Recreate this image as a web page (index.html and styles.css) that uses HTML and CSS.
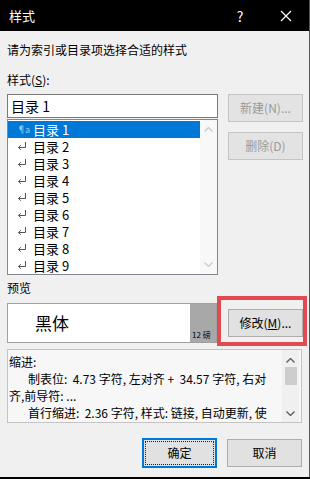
FILE: index.html
```html
<!DOCTYPE html>
<html lang="zh-CN">
<head>
    <meta charset="UTF-8">
    <meta name="viewport" content="width=device-width, initial-scale=1.0">
    <title>样式</title>
    <link rel="stylesheet" href="styles.css">
</head>
<body>

<div class="dialog">
    <div class="titlebar">
        <span class="title">样式</span>
        <span class="tb-btn">?</span>
        <span class="tb-btn">
            <svg width="12" height="12" viewBox="0 0 12 12"><path d="M1 1 L11 11 M11 1 L1 11" stroke="#fff" stroke-width="1.2"/></svg>
        </span>
    </div>

    <div class="content">
        <p class="intro">请为索引或目录项选择合适的样式</p>
        <p class="label">样式(<u>S</u>):</p>

        <div class="row top-row">
            <div class="left">
                <div class="input">目录 1</div>
                <div class="list">
                    <div class="items">
                        <div class="item selected"><span class="link-icon">¶a</span>目录 1</div>
                        <div class="item"><svg class="ret" width="10" height="9" viewBox="0 0 10 9"><path d="M8.5 0 V5.5 H1.5 M3.8 3.2 L1.5 5.5 L3.8 7.8" fill="none" stroke="#555"/></svg>目录 2</div>
                        <div class="item"><svg class="ret" width="10" height="9" viewBox="0 0 10 9"><path d="M8.5 0 V5.5 H1.5 M3.8 3.2 L1.5 5.5 L3.8 7.8" fill="none" stroke="#555"/></svg>目录 3</div>
                        <div class="item"><svg class="ret" width="10" height="9" viewBox="0 0 10 9"><path d="M8.5 0 V5.5 H1.5 M3.8 3.2 L1.5 5.5 L3.8 7.8" fill="none" stroke="#555"/></svg>目录 4</div>
                        <div class="item"><svg class="ret" width="10" height="9" viewBox="0 0 10 9"><path d="M8.5 0 V5.5 H1.5 M3.8 3.2 L1.5 5.5 L3.8 7.8" fill="none" stroke="#555"/></svg>目录 5</div>
                        <div class="item"><svg class="ret" width="10" height="9" viewBox="0 0 10 9"><path d="M8.5 0 V5.5 H1.5 M3.8 3.2 L1.5 5.5 L3.8 7.8" fill="none" stroke="#555"/></svg>目录 6</div>
                        <div class="item"><svg class="ret" width="10" height="9" viewBox="0 0 10 9"><path d="M8.5 0 V5.5 H1.5 M3.8 3.2 L1.5 5.5 L3.8 7.8" fill="none" stroke="#555"/></svg>目录 7</div>
                        <div class="item"><svg class="ret" width="10" height="9" viewBox="0 0 10 9"><path d="M8.5 0 V5.5 H1.5 M3.8 3.2 L1.5 5.5 L3.8 7.8" fill="none" stroke="#555"/></svg>目录 8</div>
                        <div class="item"><svg class="ret" width="10" height="9" viewBox="0 0 10 9"><path d="M8.5 0 V5.5 H1.5 M3.8 3.2 L1.5 5.5 L3.8 7.8" fill="none" stroke="#555"/></svg>目录 9</div>
                    </div>
                    <div class="scrollbar faint">
                        <svg width="9" height="5" viewBox="0 0 9 5"><path d="M0.5 4.5 L4.5 0.5 L8.5 4.5" fill="none" stroke="currentColor" stroke-width="1.2"/></svg>
                        <svg width="9" height="5" viewBox="0 0 9 5"><path d="M0.5 0.5 L4.5 4.5 L8.5 0.5" fill="none" stroke="currentColor" stroke-width="1.2"/></svg>
                    </div>
                </div>
            </div>
            <div class="side">
                <button class="btn" disabled>新建(N)...</button>
                <button class="btn" disabled>删除(D)</button>
            </div>
        </div>

        <p class="label preview-label">预览</p>

        <div class="row preview-row">
            <div class="preview">
                <span class="sample">黑体</span>
                <span class="size"><span>12 磅</span></span>
            </div>
            <div class="side">
                <button class="btn">修改(<u>M</u>)...</button>
                <div class="mark"></div>
            </div>
        </div>

        <div class="desc">
            <div class="desc-text">
                <div>缩进:</div>
                <div class="indent">制表位:&nbsp; 4.73 字符, 左对齐 + &nbsp;34.57 字符, 右对</div>
                <div>齐,前导符: ...</div>
                <div class="indent">首行缩进:&nbsp; 2.36 字符, 样式: 链接, 自动更新, 使</div>
            </div>
            <div class="scrollbar">
                <svg width="9" height="5" viewBox="0 0 9 5"><path d="M0.5 4.5 L4.5 0.5 L8.5 4.5" fill="none" stroke="currentColor" stroke-width="1.4"/></svg>
                <div class="thumb"></div>
                <svg width="9" height="5" viewBox="0 0 9 5"><path d="M0.5 0.5 L4.5 4.5 L8.5 0.5" fill="none" stroke="currentColor" stroke-width="1.4"/></svg>
            </div>
        </div>

        <div class="actions">
            <button class="btn primary"><span class="focus">确定</span></button>
            <button class="btn">取消</button>
        </div>
    </div>
</div>

</body>
</html>
```

FILE: styles.css
```css
body {
    margin: 0;
    background-color: #000;
    font-family: "Noto Sans CJK SC", sans-serif;
    font-size: 12px;
    color: #000;
}
.dialog {
    width: 310px;
    height: 477px;
    box-sizing: border-box;
    background-color: #f0f0f0;
    border-right: 1px solid #555;
}
.titlebar {
    height: 31px;
    background-color: #000;
    color: #fff;
    display: flex;
    align-items: center;
    padding-left: 9px;
}
.title {
    font-size: 13px;
    flex: 1;
}
.tb-btn {
    width: 46px;
    height: 31px;
    display: flex;
    align-items: center;
    justify-content: center;
    font-size: 14px;
}
.content {
    padding: 11px 7px 0 7px;
}
.intro, .label {
    margin: 0;
    line-height: 16px;
}
.label {
    margin-top: 14px;
}
.row {
    display: grid;
    grid-template-columns: 211px 1fr;
    column-gap: 10px;
}
.top-row {
    margin-top: 6px;
}
.input {
    height: 24px;
    box-sizing: border-box;
    border: 1px solid #7a7a7a;
    background-color: #fff;
    font-size: 14px;
    line-height: 22px;
    padding-left: 3px;
}
.list {
    margin-top: 1px;
    height: 156px;
    box-sizing: border-box;
    border: 1px solid #828790;
    background-color: #fff;
    display: flex;
}
.items {
    flex: 1;
    padding-top: 1px;
}
.item {
    height: 17px;
    line-height: 17px;
    display: flex;
    align-items: center;
    padding-left: 9px;
    font-size: 13px;
}
.item .ret {
    margin-right: 6px;
}
.item.selected {
    background-color: #0078d7;
    color: #fff;
}
.link-icon {
    width: 16px;
    font-size: 9px;
    line-height: 17px;
    color: #9cc7ee;
    letter-spacing: -1px;
}
.scrollbar {
    width: 17px;
    display: flex;
    flex-direction: column;
    align-items: center;
    justify-content: space-between;
    padding: 7px 0;
    box-sizing: border-box;
    background-color: #f0f0f0;
    color: #606060;
}
.scrollbar.faint {
    background-color: #f8f8f8;
    color: #c8c8c8;
}
.side {
    display: flex;
    flex-direction: column;
    gap: 10px;
    position: relative;
}
.btn {
    width: 75px;
    height: 28px;
    padding: 0;
    border: 1px solid #adadad;
    background-color: #e1e1e1;
    font-family: inherit;
    font-size: 12px;
    line-height: 16px;
    color: #000;
}
.btn:disabled {
    border-color: #c4c4c4;
    background-color: #e3e3e3;
    color: #9a9a9a;
}
.preview-label {
    margin-top: 5px;
}
.preview-row {
    margin-top: 7px;
    align-items: center;
}
.preview {
    width: 210px;
    height: 40px;
    box-sizing: border-box;
    border: 1px solid #a0a0a0;
    background-color: #fff;
    display: flex;
}
.sample {
    flex: 1;
    font-size: 17px;
    line-height: 38px;
    padding-left: 27px;
}
.size {
    width: 26px;
    background-color: #a8a8a8;
    display: flex;
    align-items: flex-end;
    font-size: 8px;
    line-height: 12px;
    padding: 0 0 1px 2px;
    box-sizing: border-box;
}
/* red annotation round the 修改 button */
.mark {
    position: absolute;
    left: -11px;
    top: -13px;
    width: 90px;
    height: 50px;
    box-sizing: border-box;
    border: 4px solid #e04a50;
}
.desc {
    margin-top: 6px;
    height: 74px;
    box-sizing: border-box;
    border: 1px solid #c4c4c4;
    background-color: #f7f7f7;
    display: flex;
}
.desc-text {
    flex: 1;
    overflow: hidden;
    padding: 3px 0 0 1px;
    line-height: 17px;
    white-space: nowrap;
}
.desc-text .indent {
    padding-left: 19px;
}
.desc .scrollbar {
    margin-right: 2px;
    justify-content: flex-start;
    padding: 8px 0 6px;
}
.thumb {
    width: 12px;
    height: 18px;
    margin: 4px 0 auto;
    background-color: #cdcdcd;
}
.actions {
    display: flex;
    justify-content: flex-end;
    align-items: center;
    gap: 10px;
    margin-top: 15px;
}
.btn.primary {
    height: 30px;
    border: 2px solid #0078d7;
    padding: 1px;
}
.focus {
    display: block;
    height: 100%;
    box-sizing: border-box;
    border: 1px dotted #222;
    line-height: 22px;
}
```
